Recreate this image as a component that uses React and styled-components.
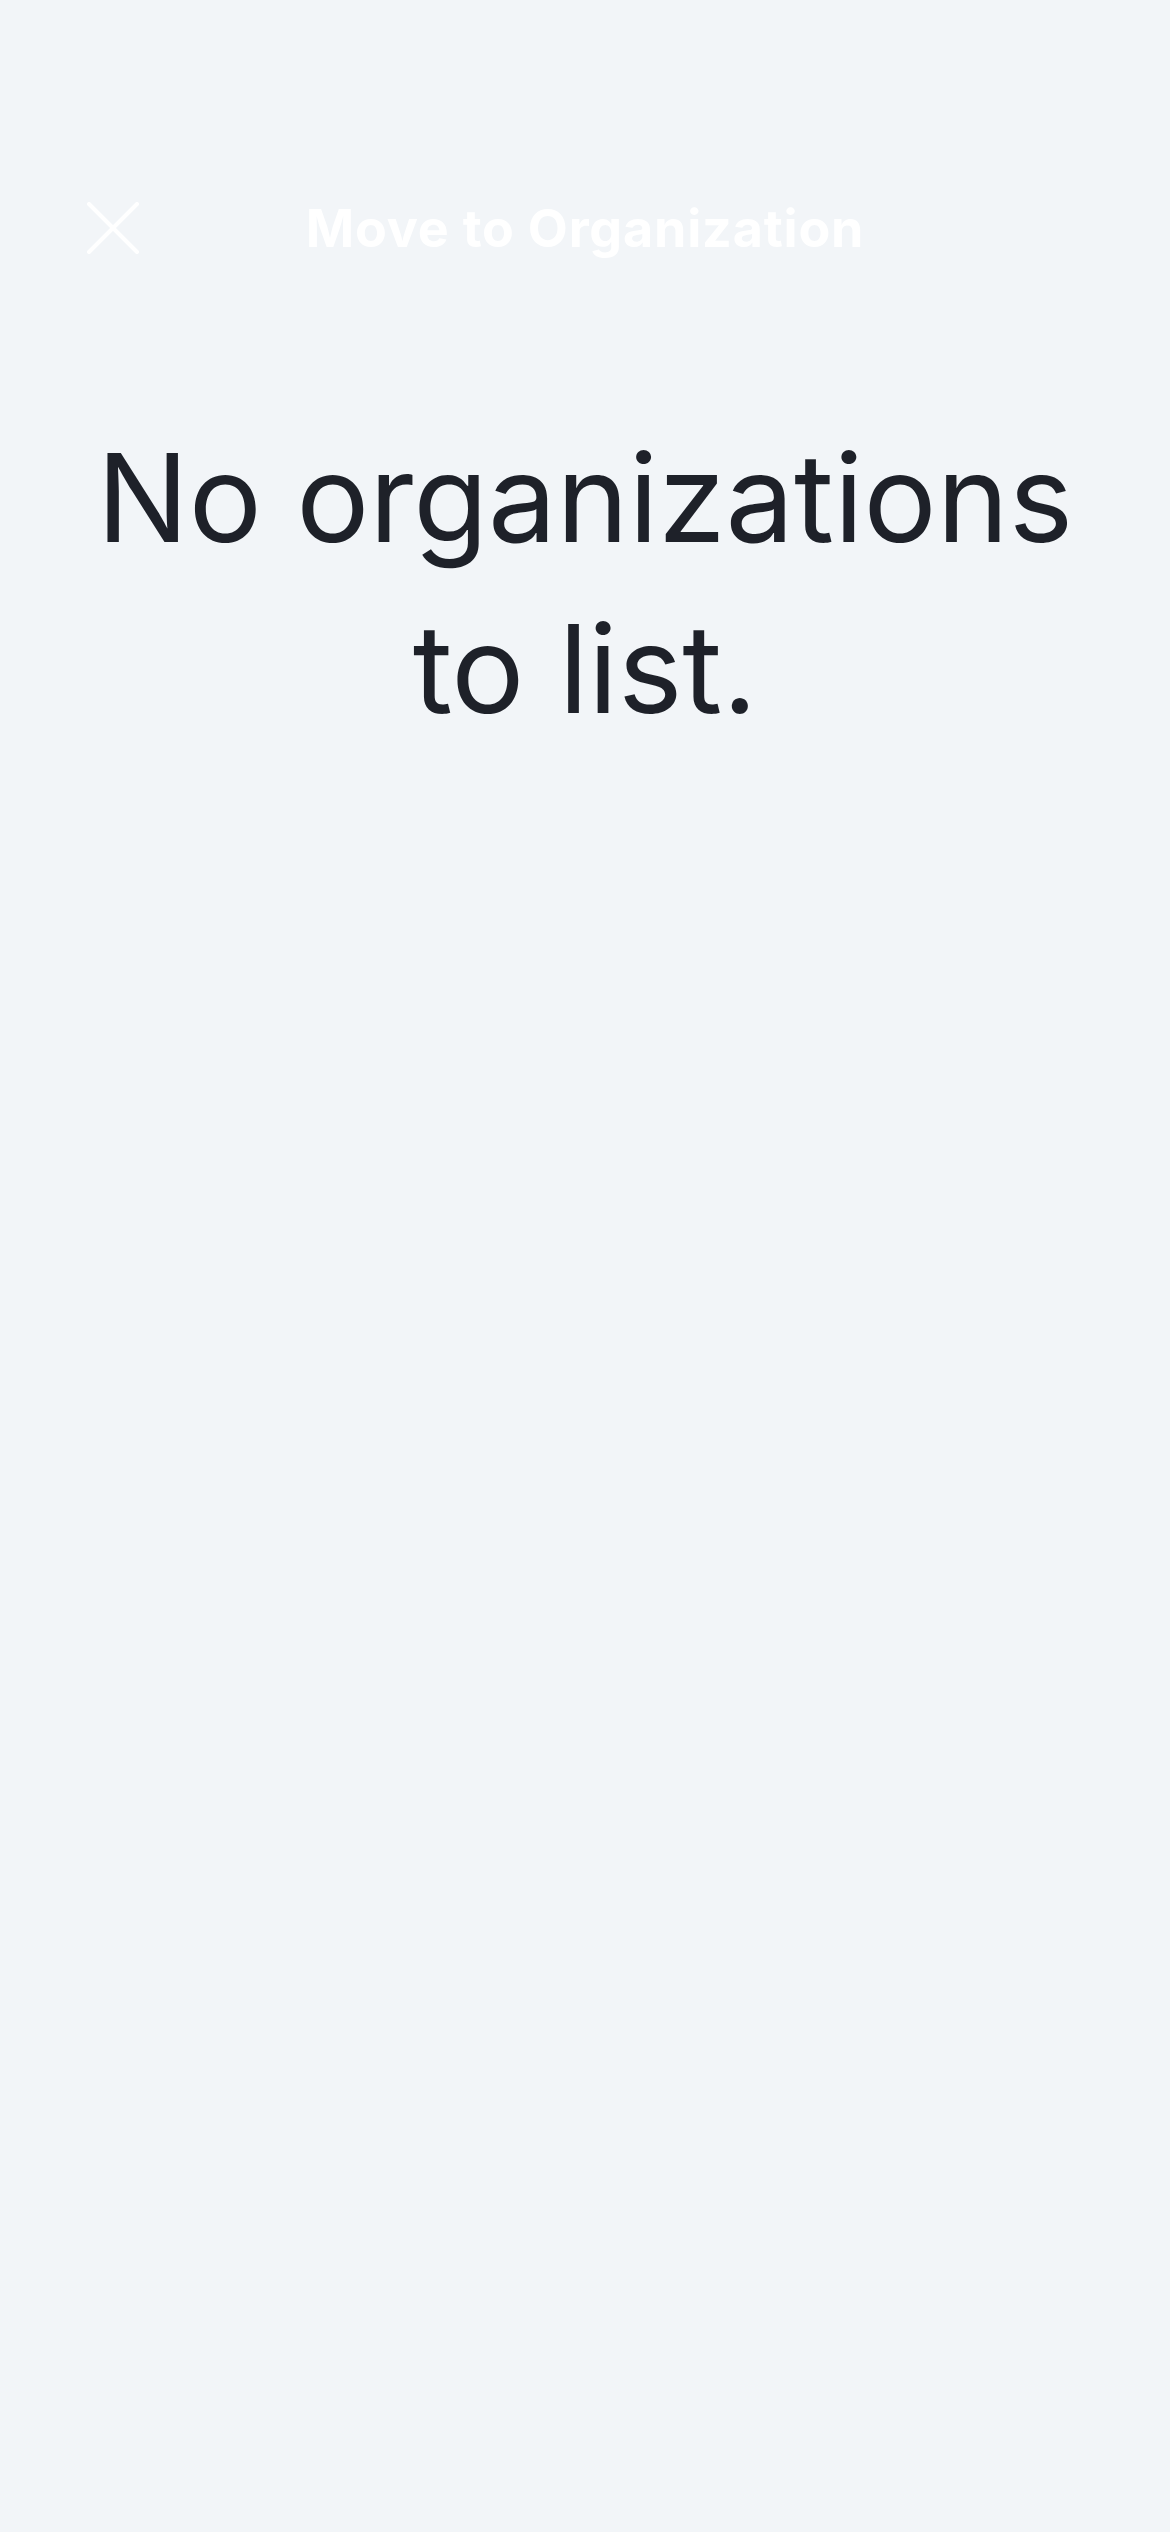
import React from 'react';
import styled, { createGlobalStyle } from 'styled-components';

const GlobalStyle = createGlobalStyle`
  html, body {
    margin: 0;
    padding: 0;
    background-color: #f2f5f8;
  }
  body {
    font-family: Inter, "Noto Sans", sans-serif;
    -webkit-font-smoothing: antialiased;
  }
`;

const Screen = styled.div`
  min-height: 2532px;
  background-color: #f2f5f8;
  padding-top: 173px;
  box-sizing: border-box;
`;

const Header = styled.header`
  display: grid;
  grid-template-columns: 1fr auto 1fr;
  align-items: center;
  height: 110px;
  padding: 0 87px;
`;

const CloseButton = styled.button`
  justify-self: start;
  display: flex;
  align-items: center;
  justify-content: center;
  width: 52px;
  height: 52px;
  padding: 0;
  border: none;
  background: transparent;
  cursor: pointer;
`;

const Title = styled.h1`
  margin: 0;
  font-size: 52px;
  font-weight: 700;
  color: #ffffff;
  letter-spacing: 0.8px;
  white-space: nowrap;
`;

const EmptyMessage = styled.p`
  margin: 129px 0 0;
  padding: 0 40px;
  text-align: center;
  font-size: 122px;
  line-height: 171px;
  font-weight: 400;
  color: #1e2129;
  letter-spacing: 0;
`;

const CloseIcon = () => (
  <svg width="52" height="52" viewBox="0 0 52 52" fill="none">
    <path
      d="M2 2L50 50M50 2L2 50"
      stroke="#ffffff"
      strokeWidth="4"
      strokeLinecap="round"
    />
  </svg>
);

export default function App() {
  return (
    <>
      <GlobalStyle />
      <Screen>
        <Header>
          <CloseButton aria-label="Close">
            <CloseIcon />
          </CloseButton>
          <Title>Move to Organization</Title>
          <span />
        </Header>
        <EmptyMessage>
          No organizations
          <br />
          to list.
        </EmptyMessage>
      </Screen>
    </>
  );
}
